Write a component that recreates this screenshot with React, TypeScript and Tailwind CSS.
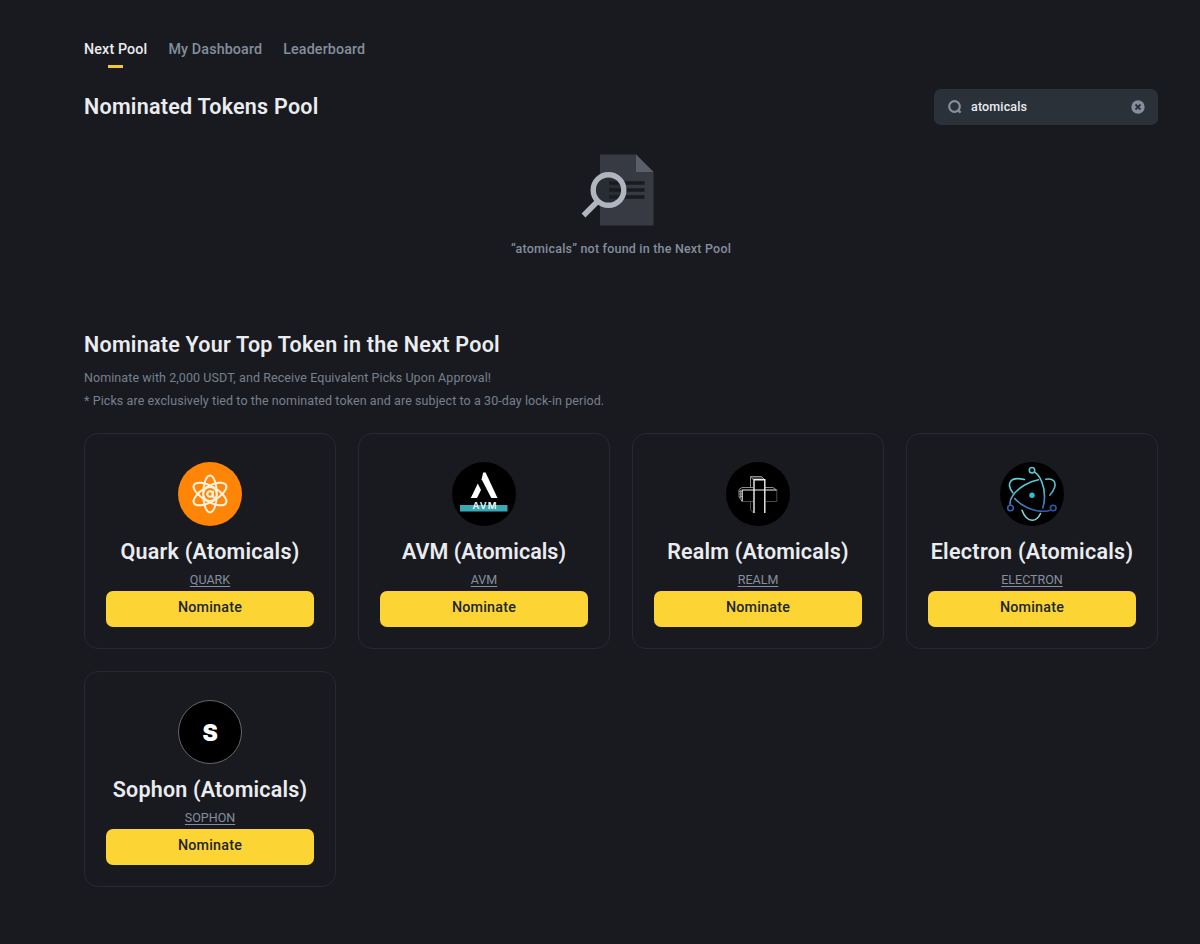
import type { ReactNode } from "react";

type Token = {
  name: string;
  symbol: string;
  titleClass: string;
  logo: ReactNode;
};

const QuarkLogo = () => (
  <svg viewBox="0 0 64 64" className="h-16 w-16">
    <circle cx="32" cy="32" r="32" fill="#ff8507" />
    <g fill="none" stroke="#fff3e0" strokeWidth="2">
      <ellipse cx="32" cy="32" rx="6.8" ry="18.4" />
      <ellipse cx="32" cy="32" rx="7.6" ry="18.4" transform="rotate(60 32 32)" />
      <ellipse cx="32" cy="32" rx="7.6" ry="18.4" transform="rotate(120 32 32)" />
      <circle cx="32" cy="32" r="6.6" strokeWidth="1.2" />
      <circle cx="32" cy="32" r="2.7" strokeWidth="2" />
      <path d="M35.2 28.8v6.6h1.6" strokeWidth="1.7" />
    </g>
  </svg>
);

const AvmLogo = () => (
  <svg viewBox="0 0 64 64" className="h-16 w-16">
    <circle cx="32" cy="32" r="32" fill="#000" />
    <path d="M31.2 10.500h2.400L45.500 36h-6.200L29.600 17.200z" fill="#fff" />
    <path d="M25.800 21.500 29 28l-4 8h-6.200z" fill="#fff" />
    <path d="M8 43h47.500v6.500H8z" fill="#38a9b5" />
    <text
      x="33"
      y="46.800"
      textAnchor="middle"
      fontFamily="Inter, sans-serif"
      fontSize="9.500"
      fontWeight="600"
      letterSpacing="1.100"
      fill="#eefafa"
    >
      AVM
    </text>
  </svg>
);

const RealmLogo = () => (
  <svg viewBox="0 0 64 64" className="h-16 w-16">
    <circle cx="32" cy="32" r="32" fill="#000" />
    <g fill="none" stroke="#8a8a8a" strokeWidth="1">
      <path d="M24.500 25.500V14.500h11l3 3M26 16h11M24.500 14.500l3 3.500" />
      <path d="M13 27.500l3-2h11M13 27.500v7.500l3 4M14.500 28v8M12.800 29.500h3M13 32h3M13.500 34.500h3" />
      <path d="M39 25.500h8l3.500 2.500" />
      <path d="M50.800 28v11.500H40M16.500 39.500h11M24.500 39.500v8l3 3.500" stroke="#4b4b4b" />
    </g>
    <g fill="none" stroke="#f1f1f1" strokeWidth="1.400">
      <path d="M28 51V17.800h10.800V51" />
      <path d="M16.200 39.500V28H28M28 28h22.600" strokeWidth="1.100" />
    </g>
  </svg>
);

const ElectronLogo = () => (
  <svg viewBox="0 0 64 64" className="h-16 w-16">
    <defs>
      <linearGradient id="electron" gradientUnits="userSpaceOnUse" x1="28" y1="8" x2="34" y2="52">
        <stop offset="0" stopColor="#63dbe0" />
        <stop offset="0.500" stopColor="#5cb5cf" />
        <stop offset="1" stopColor="#2458ad" />
      </linearGradient>
    </defs>
    <circle cx="32" cy="32" r="32" fill="#000" />
    <g fill="none" stroke="url(#electron)" strokeWidth="1.600" strokeLinecap="round">
      <path d="M35 10.300C40.500 14 44.500 24 44.500 34.500c0 4-.6 8-1.700 11.500" />
      <path d="M38.500 17.800C29 19.500 18.500 25.500 13 33.200c-2.500 3.500-3.400 7-2.700 10" />
      <path d="M14.800 36.500C21 44 32.500 49.300 43.500 49.300c2.400 0 4.200-.3 6-.9" />
      <path d="M24.500 17.500C17 15.800 11.500 17 10 20.500c-1.200 2.800 0 6.600 2.800 10.300" />
      <path d="M45.800 17.200c4.500-.6 7.700.5 8.800 3.100 1.400 3.400-.6 8-4.800 12.900" />
    </g>
    <path
      d="M22 48.300c2.300 6.200 6 10 10.200 10 3.500 0 6.400-2.500 8.300-6.800"
      fill="none"
      stroke="#83d6d7"
      strokeWidth="1.600"
      strokeLinecap="round"
    />
    <circle cx="32" cy="8.200" r="2.700" fill="none" stroke="#5fbfd0" strokeWidth="1.600" />
    <circle cx="10.500" cy="46" r="2.800" fill="none" stroke="#315fb5" strokeWidth="1.600" />
    <circle cx="53.200" cy="46" r="2.800" fill="none" stroke="#2d57ad" strokeWidth="1.600" />
    <circle cx="32" cy="33.200" r="2.700" fill="#27c5cf" />
  </svg>
);

const SophonLogo = () => (
  <svg viewBox="0 0 64 64" className="h-16 w-16">
    <circle cx="32" cy="32" r="31.500" fill="#000" stroke="#66676c" />
    <text
      x="32.200"
      y="40.900"
      textAnchor="middle"
      fontFamily="Inter, sans-serif"
      fontSize="23"
      fontWeight="900"
      fill="#fff"
    >
      S
    </text>
  </svg>
);

const tokens: Token[] = [
  {
    name: "Quark (Atomicals)",
    symbol: "QUARK",
    titleClass: "tracking-[0.25px]",
    logo: <QuarkLogo />,
  },
  {
    name: "AVM (Atomicals)",
    symbol: "AVM",
    titleClass: "tracking-[0.03px]",
    logo: <AvmLogo />,
  },
  {
    name: "Realm (Atomicals)",
    symbol: "REALM",
    titleClass: "tracking-[0.18px]",
    logo: <RealmLogo />,
  },
  {
    name: "Electron (Atomicals)",
    symbol: "ELECTRON",
    titleClass: "tracking-[0.3px]",
    logo: <ElectronLogo />,
  },
  {
    name: "Sophon (Atomicals)",
    symbol: "SOPHON",
    titleClass: "tracking-[0.2px]",
    logo: <SophonLogo />,
  },
];

function TokenCard({ token }: { token: Token }) {
  return (
    <div className="flex h-[216px] flex-col items-center rounded-[14px] border border-[#262934] px-[21px] pt-7">
      {token.logo}
      <h3
        className={`mt-2.5 text-[21.5px] leading-8 font-semibold whitespace-nowrap text-[#eaecef] ${token.titleClass}`}
      >
        {token.name}
      </h3>
      <a className="mt-[3px] mb-0.5 text-[12.5px] leading-[18px] text-[#848e9c] underline underline-offset-2">
        {token.symbol}
      </a>
      <button className="h-9 w-full shrink-0 rounded-[7px] bg-[#fcd535] pb-0.5 text-[14.3px] font-medium tracking-[0.2px] text-[#202630]">
        Nominate
      </button>
    </div>
  );
}

function EmptyState() {
  return (
    <div className="mt-[25px] flex flex-col items-center">
      <svg viewBox="0 0 80 80" className="mr-[7px] h-20 w-20">
        <path d="M22 4.500h36l17.500 17.500v53.500H22z" fill="#373a43" />
        <path d="M58 4.500 75.500 22H58z" fill="#5b5f69" />
        <circle cx="30.500" cy="40" r="15" fill="#2a2c34" />
        <path d="M31 33h35.500M31 40h35.500M31 47h35.500" stroke="#1a1b20" strokeWidth="3.400" />
        <circle cx="30.500" cy="40" r="15.300" fill="none" stroke="#b0b5bf" strokeWidth="5.400" />
        <path d="M20.500 50.500 5.500 65.500" stroke="#b0b5bf" strokeWidth="5.400" />
      </svg>
      <p className="mt-[9px] text-[12.5px] leading-5 font-medium tracking-[0.2px] text-[#848e9c]">
        “atomicals” not found in the Next Pool
      </p>
    </div>
  );
}

export default function App() {
  return (
    <main className="h-[944px] w-full overflow-hidden bg-[#191a20] pt-[39px] pr-[42px] pl-[84px] font-[Roboto,sans-serif]">
      <nav className="flex h-[29px] gap-[21px] text-[14.3px] leading-5 font-medium tracking-[0.13px] text-[#848e9c]">
        <div className="flex flex-col items-center text-[#eaecef]">
          <span>Next Pool</span>
          <span className="mt-1.5 h-[3px] w-[15px] bg-[#f0c831]" />
        </div>
        <span>My Dashboard</span>
        <span>Leaderboard</span>
      </nav>

      <header className="mt-[21px] flex h-9 items-center justify-between">
        <h2 className="text-[21.5px] leading-8 font-semibold tracking-[0.25px] text-[#eaecef]">
          Nominated Tokens Pool
        </h2>
        <div className="flex h-9 w-56 items-center rounded-[7px] bg-[#2b3139] px-[13px]">
          <svg viewBox="0 0 16 16" className="h-4 w-4">
            <circle cx="7.500" cy="7.500" r="5.300" fill="none" stroke="#848e9c" strokeWidth="2.200" />
            <path d="M10.500 10.800 13.600 13.600" stroke="#848e9c" strokeWidth="2.400" />
          </svg>
          <span className="ml-2 flex-1 text-[12.5px] font-medium tracking-[0.15px] text-[#eaecef]">
            atomicals
          </span>
          <svg viewBox="0 0 14 14" className="h-[14px] w-[14px]">
            <circle cx="7" cy="7" r="6.700" fill="#848e9c" />
            <path d="M4.500 4.500l5 5m0-5-5 5" stroke="#2b3139" strokeWidth="1.800" />
          </svg>
        </div>
      </header>

      <EmptyState />

      <section className="mt-[70px]">
        <h2 className="text-[21.5px] leading-8 font-semibold tracking-[0.25px] text-[#eaecef]">
          Nominate Your Top Token in the Next Pool
        </h2>
        <p className="mt-[5px] text-[12.5px] leading-[23px] tracking-[0.08px] text-[#76808d]">
          Nominate with 2,000 USDT, and Receive Equivalent Picks Upon Approval!
        </p>
        <p className="text-[12.5px] leading-[23px] tracking-[0.09px] text-[#76808d]">
          * Picks are exclusively tied to the nominated token and are subject to a 30-day lock-in period.
        </p>
        <div className="mt-[21px] grid grid-cols-4 gap-[22px]">
          {tokens.map((token) => (
            <TokenCard key={token.symbol} token={token} />
          ))}
        </div>
      </section>
    </main>
  );
}
